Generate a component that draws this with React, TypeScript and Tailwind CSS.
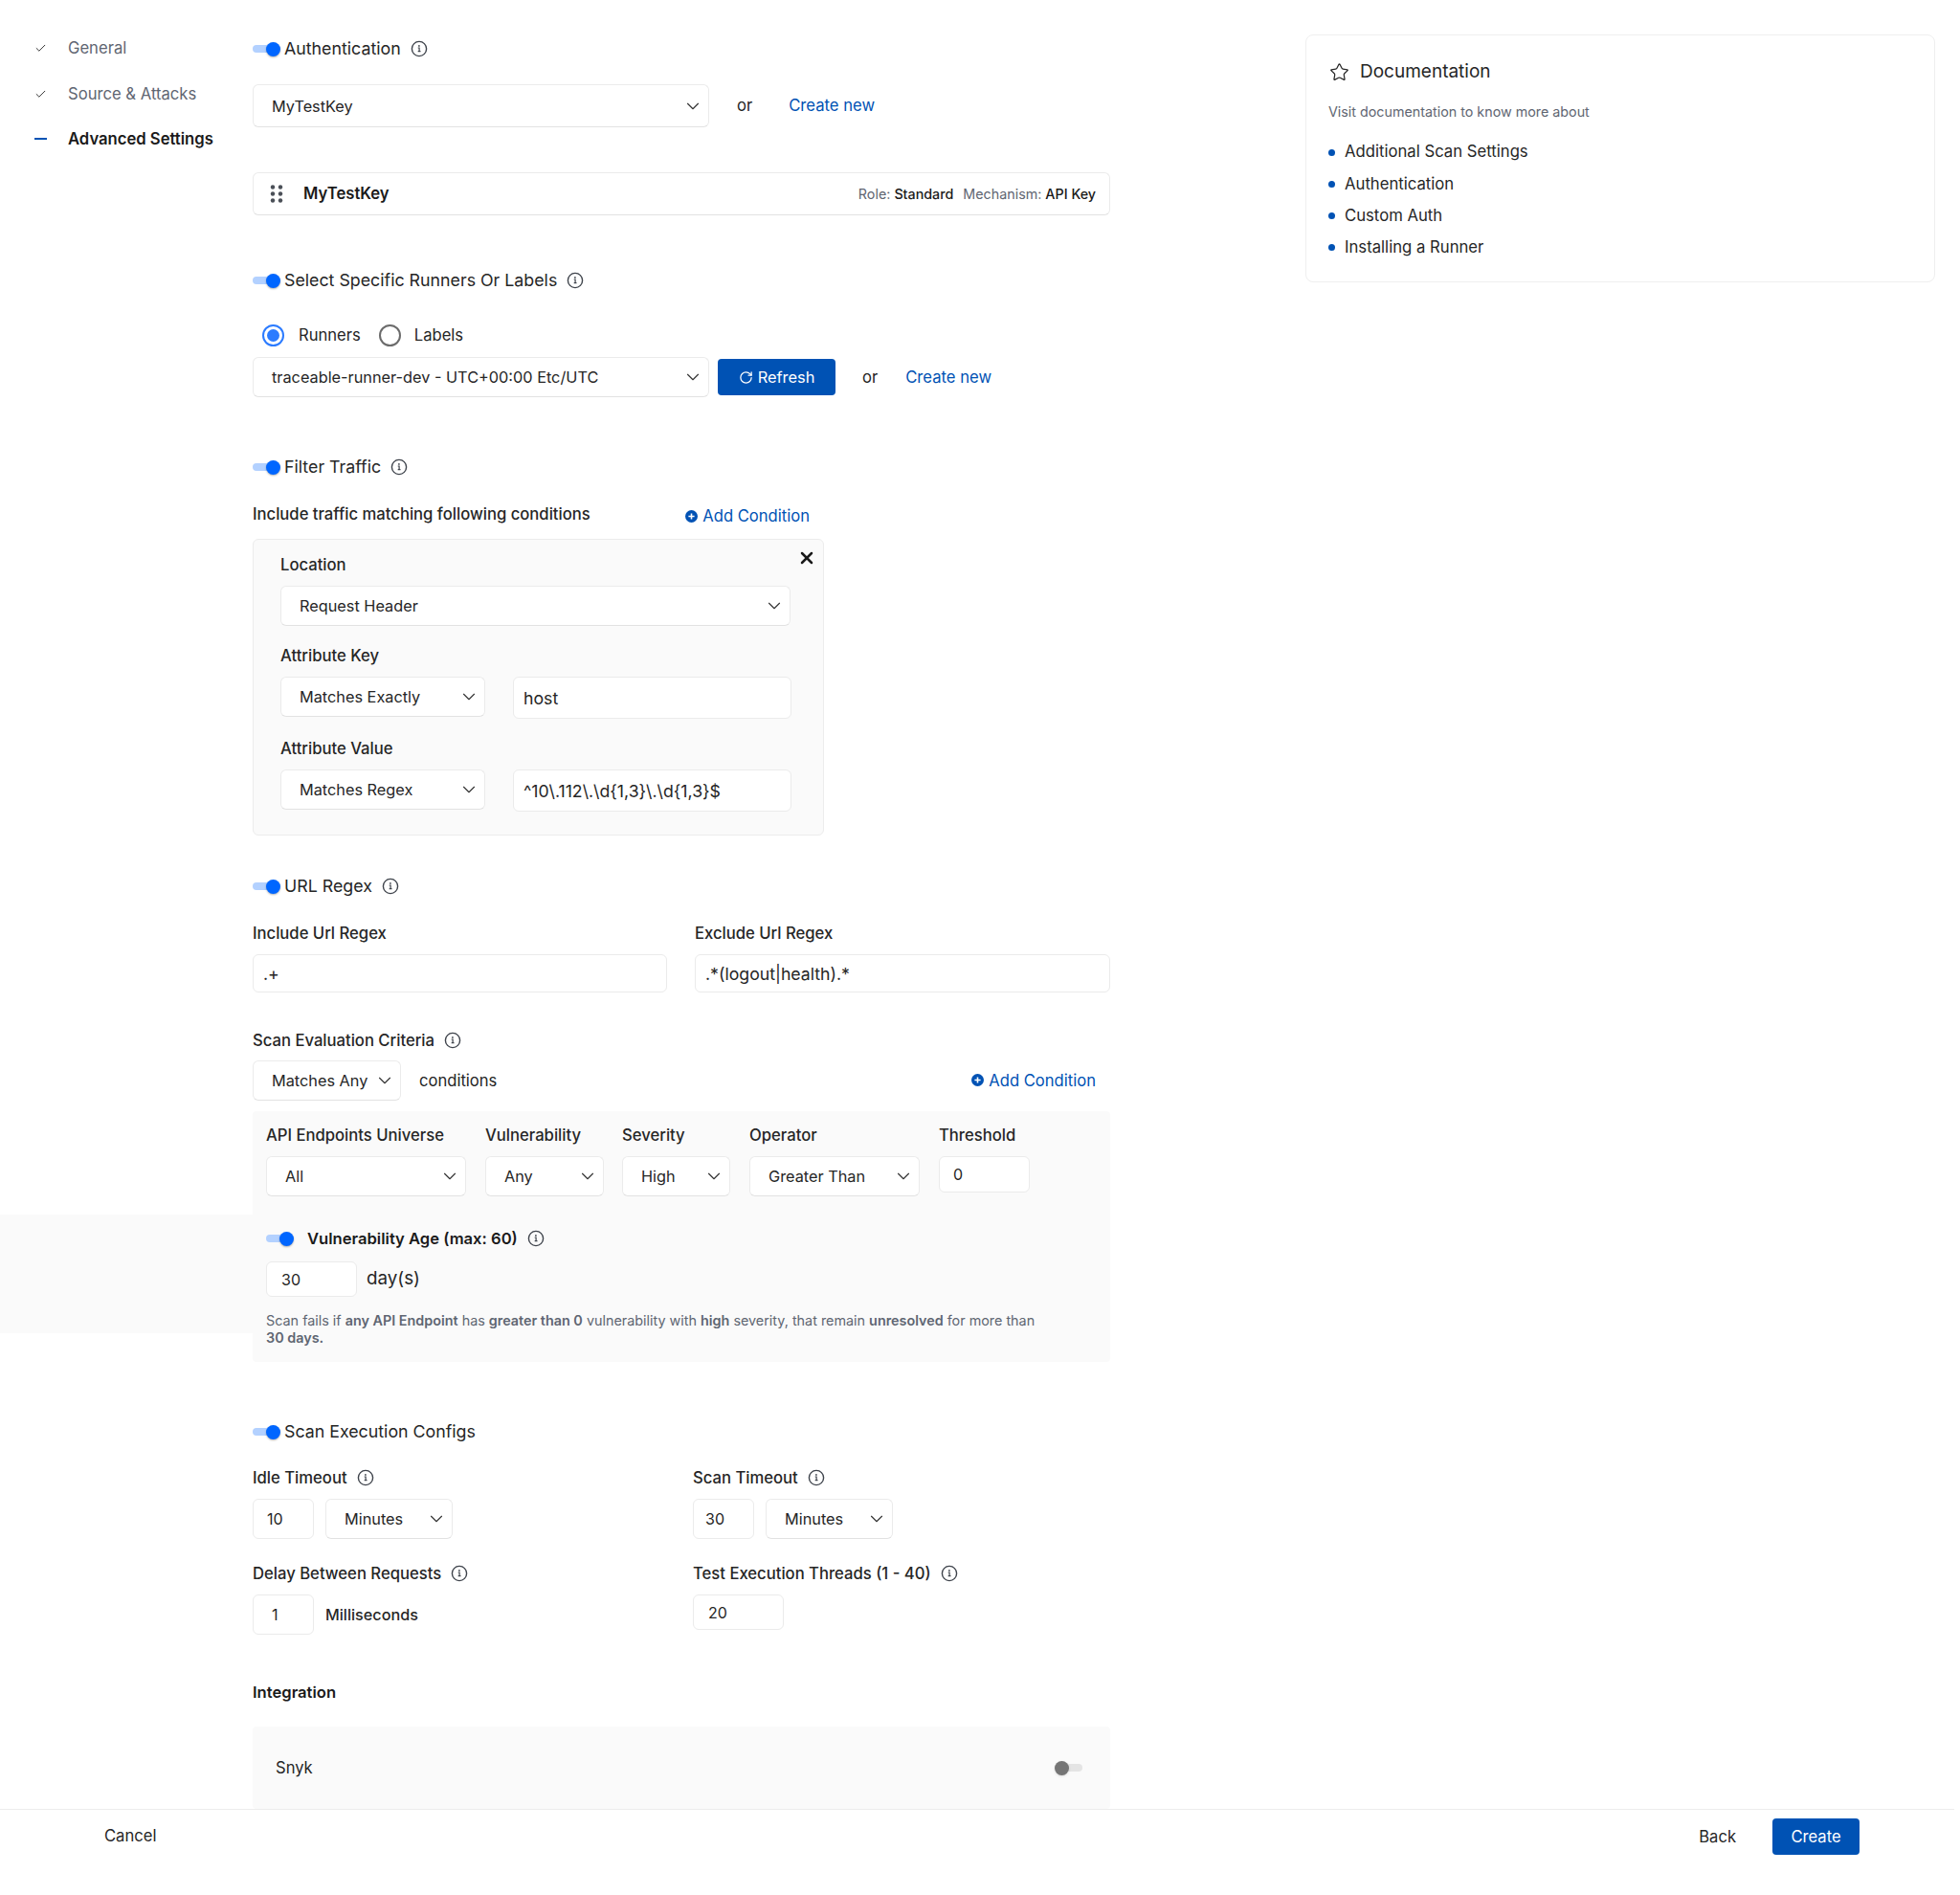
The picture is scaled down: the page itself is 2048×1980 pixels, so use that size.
import React from "react";
import { Check, ChevronDown, RotateCw, Star, X } from "lucide-react";

function Toggle({ on = true }: { on?: boolean }) {
  if (!on) {
    return (
      <div className="flex items-center shrink-0 w-[29px]">
        <div className="w-[15px] h-[15px] rounded-full bg-[#757575] shadow-sm z-10" />
        <div className="w-[20px] h-[8px] -ml-[6px] rounded-r-full bg-[#e4e4e4]" />
      </div>
    );
  }
  return (
    <div className="flex items-center shrink-0 w-[29px]">
      <div className="w-[20px] h-[8px] rounded-l-full bg-[#b3d1ff]" />
      <div className="w-[15px] h-[15px] -ml-[6px] rounded-full bg-[#0066ff] shadow-[0_1px_2px_rgba(0,0,0,0.3)]" />
    </div>
  );
}

function Info() {
  return (
    <svg width="18" height="18" viewBox="0 0 18 18" fill="none" className="shrink-0">
      <circle cx="9" cy="9" r="7.6" stroke="#3f444c" strokeWidth="1.4" />
      <path d="M7.7 8h1.4v3.7M7.7 11.7h2.8" stroke="#3f444c" strokeWidth="1.2" />
      <circle cx="8.9" cy="5.9" r="0.9" fill="#3f444c" />
    </svg>
  );
}

function Select({ label, w, h = "h-[42px]", pl = "pl-[19px]" }: { label: string; w: string; h?: string; pl?: string }) {
  return (
    <div className={`${w} ${h} ${pl} pr-[5px] shrink-0 flex items-center justify-between bg-white rounded-md border border-[#ebebeb] border-b-[#e2e2e2] text-[16.3px] text-[#262626]`}>
      <span className="pt-[1px]">{label}</span>
      <ChevronDown size={22} strokeWidth={1.25} className="text-[#333]" />
    </div>
  );
}

function Field({ value, w, h, pl = "pl-[10px]", text = "text-[17.7px]" }: { value: string; w: string; h: string; pl?: string; text?: string }) {
  return (
    <input
      readOnly
      value={value}
      className={`${w} ${h} ${pl} ${text} shrink-0 bg-white rounded-md border border-[#ebebeb] text-[#262626] outline-none`}
    />
  );
}

function SectionHead({ title, info = true, cls }: { title: string; info?: boolean; cls: string }) {
  return (
    <div className={`flex items-center h-6 ${cls}`}>
      <Toggle />
      <span className="ml-[4px] text-[17.8px] text-[#262626]">{title}</span>
      {info && <span className="ml-[10px]"><Info /></span>}
    </div>
  );
}

function PlusDot() {
  return (
    <svg width="13" height="13" viewBox="0 0 13 13" className="shrink-0">
      <circle cx="6.5" cy="6.5" r="6.5" fill="#0052b4" />
      <path d="M6.5 3.4v6.2M3.4 6.5h6.2" stroke="#fff" strokeWidth="1.6" />
    </svg>
  );
}

function AddCondition() {
  return (
    <div className="flex items-center gap-[5px] text-[16.6px] text-[#0052b4]">
      <PlusDot />
      <span>Add Condition</span>
    </div>
  );
}

function Label({ children, cls = "" }: { children: React.ReactNode; cls?: string }) {
  return <div className={`h-6 flex items-center text-[16.65px] font-medium text-[#262626] ${cls}`}>{children}</div>;
}

function SideItem({ label, state, cls }: { label: string; state: "done" | "active"; cls: string }) {
  return (
    <div className={`flex items-center h-6 ${cls}`}>
      <div className="w-[35px] flex items-center">
        {state === "done" ? (
          <Check size={13} strokeWidth={1.7} className="text-[#222]" />
        ) : (
          <div className="w-[13px] h-[2px] bg-[#0052b4]" />
        )}
      </div>
      <span className={state === "done" ? "text-[16.65px] text-[#5f6672]" : "text-[16.65px] font-semibold text-[#1a1a1a]"}>{label}</span>
    </div>
  );
}

const docs = ["Additional Scan Settings", "Authentication", "Custom Auth", "Installing a Runner"];

export default function App() {
  return (
    <div className="[font-family:Inter,sans-serif] w-[2048px] h-[1980px] bg-white flex flex-col overflow-hidden">
      <div className="flex h-[1890px]">
        {/* sidebar */}
        <aside className="w-[264px] shrink-0 pl-[36px] pt-[38px]">
          <SideItem label="General" state="done" cls="" />
          <SideItem label="Source & Attacks" state="done" cls="mt-[24px]" />
          <SideItem label="Advanced Settings" state="active" cls="mt-[23px]" />
        </aside>

        {/* main form */}
        <main className="w-[896px] shrink-0 pt-[39px]">
          <SectionHead title="Authentication" cls="" />
          <div className="flex items-center mt-[25px]">
            <Select label="MyTestKey" w="w-[477px]" h="h-[45px]" />
            <span className="ml-[29px] text-[16.6px] text-[#262626]">or</span>
            <span className="ml-[38px] text-[16.65px] text-[#0052b4]">Create new</span>
          </div>

          <div className="mt-[47px] h-[45px] flex items-center justify-between pl-[17px] pr-[14px] rounded-md border border-[#ebebeb] border-b-[#e2e2e2]">
            <div className="flex items-center">
              <svg width="14" height="19" viewBox="0 0 14 19" fill="#4a4f57">
                <circle cx="3" cy="2.5" r="2.2" />
                <circle cx="11" cy="2.5" r="2.2" />
                <circle cx="3" cy="9.5" r="2.2" />
                <circle cx="11" cy="9.5" r="2.2" />
                <circle cx="3" cy="16.5" r="2.2" />
                <circle cx="11" cy="16.5" r="2.2" />
              </svg>
              <span className="ml-[21px] text-[16.65px] font-semibold text-[#1a1a1a]">MyTestKey</span>
            </div>
            <div className="text-[14.3px] text-[#5f6672]">
              Role: <span className="font-medium text-[#1a1a1a]">Standard</span>
              <span className="ml-[10px]">Mechanism: </span>
              <span className="font-medium text-[#1a1a1a]">API Key</span>
            </div>
          </div>

          <SectionHead title="Select Specific Runners Or Labels" cls="mt-[56px]" />
          <div className="flex items-center h-6 mt-[33px] pl-[10px] text-[16.6px] text-[#262626]">
            <div className="w-[23px] h-[23px] rounded-full border-2 border-[#2b7bff] flex items-center justify-center">
              <div className="w-[13px] h-[13px] rounded-full bg-[#2b7bff]" />
            </div>
            <span className="ml-[15px]">Runners</span>
            <div className="ml-[19px] w-[23px] h-[23px] rounded-full border-2 border-[#6b6b6b]" />
            <span className="ml-[14px]">Labels</span>
          </div>
          <div className="flex items-center mt-[11px]">
            <Select label="traceable-runner-dev - UTC+00:00 Etc/UTC" w="w-[477px]" />
            <div className="ml-[9px] w-[123px] h-[38px] rounded bg-[#0052b4] text-white text-[16.4px] flex items-center justify-center gap-[5px]">
              <RotateCw size={15} strokeWidth={2} />
              <span>Refresh</span>
            </div>
            <span className="ml-[28px] text-[16.6px] text-[#262626]">or</span>
            <span className="ml-[29px] text-[16.65px] text-[#0052b4]">Create new</span>
          </div>

          <SectionHead title="Filter Traffic" cls="mt-[61px]" />
          <div className="flex items-center h-6 mt-[27px] w-[596px] justify-between">
            <span className="text-[16.65px] font-medium text-[#262626] -mt-[3px]">Include traffic matching following conditions</span>
            <div className="mr-[14px]"><AddCondition /></div>
          </div>

          <div className="relative mt-[12px] w-[597px] h-[310px] rounded-md border border-[#ececec] bg-[#fafafa] pl-[28px] pt-[14px]">
            <X size={20} strokeWidth={3} className="absolute top-[9px] right-[7px] text-[#1a1a1a]" />
            <Label>Location</Label>
            <div className="mt-[10px]"><Select label="Request Header" w="w-[533px]" /></div>
            <Label cls="mt-[19px]">Attribute Key</Label>
            <div className="mt-[10px] flex items-start gap-[29px]">
              <Select label="Matches Exactly" w="w-[214px]" />
              <Field value="host" w="w-[291px]" h="h-[44px]" />
            </div>
            <Label cls="mt-[19px]">Attribute Value</Label>
            <div className="mt-[10px] flex items-start gap-[29px]">
              <Select label="Matches Regex" w="w-[214px]" />
              <Field value="^10\.112\.\d{1,3}\.\d{1,3}$" w="w-[291px]" h="h-[44px]" />
            </div>
          </div>

          <SectionHead title="URL Regex" cls="mt-[41px]" />
          <div className="flex gap-[29px] mt-[25px]">
            <div className="w-[433px]">
              <Label>Include Url Regex</Label>
              <div className="mt-[10px]"><Field value=".+" w="w-[433px]" h="h-[40px]" /></div>
            </div>
            <div className="w-[434px]">
              <Label>Exclude Url Regex</Label>
              <div className="mt-[10px]"><Field value=".*(logout|health).*" w="w-[434px]" h="h-[40px]" /></div>
            </div>
          </div>

          <div className="flex items-center gap-[10px] h-6 mt-[38px]">
            <span className="text-[16.65px] font-medium text-[#262626]">Scan Evaluation Criteria</span>
            <Info />
          </div>
          <div className="flex items-center mt-[9px]">
            <Select label="Matches Any" w="w-[155px]" />
            <span className="ml-[19px] text-[16.6px] text-[#262626]">conditions</span>
            <div className="ml-auto mr-[15px]"><AddCondition /></div>
          </div>

          <div className="relative mt-[11px] h-[262px] bg-[#fafafa] pl-[14px] pt-[13px] rounded-sm">
            <div className="absolute -left-[264px] top-[108px] w-[264px] h-[124px] bg-[#fafafa]" />
            <div className="flex">
              <div>
                <Label cls="mb-[10px]">API Endpoints Universe</Label>
                <Select label="All" w="w-[209px]" />
              </div>
              <div className="ml-[20px]">
                <Label cls="mb-[10px]">Vulnerability</Label>
                <Select label="Any" w="w-[124px]" />
              </div>
              <div className="ml-[19px]">
                <Label cls="mb-[10px]">Severity</Label>
                <Select label="High" w="w-[113px]" />
              </div>
              <div className="ml-[20px]">
                <Label cls="mb-[10px]">Operator</Label>
                <Select label="Greater Than" w="w-[178px]" />
              </div>
              <div className="ml-[20px]">
                <Label cls="mb-[10px]">Threshold</Label>
                <Field value="0" w="w-[95px]" h="h-[38px]" pl="pl-[14px]" text="text-base" />
              </div>
            </div>
            <div className="flex items-center h-6 mt-[32px]">
              <Toggle />
              <span className="ml-[14px] text-[16.6px] font-semibold text-[#1a1a1a]">Vulnerability Age (max: 60)</span>
              <span className="ml-[10px]"><Info /></span>
            </div>
            <div className="flex items-center mt-[12px]">
              <Field value="30" w="w-[95px]" h="h-[37px]" pl="pl-[15px]" text="text-base" />
              <span className="ml-[10px] text-[18.8px] text-[#262626]">day(s)</span>
            </div>
            <p className="mt-[16px] w-[810px] text-[14.37px] leading-[18px] text-[#5f6672]">
              Scan fails if <b className="font-semibold">any API Endpoint</b> has <b className="font-semibold">greater than 0</b> vulnerability with <b className="font-semibold">high</b> severity, that remain <b className="font-semibold">unresolved</b> for more than <b className="font-semibold">30 days.</b>
            </p>
          </div>

          <SectionHead title="Scan Execution Configs" info={false} cls="mt-[61px]" />
          <div className="flex mt-[24px]">
            <div className="w-[460px]">
              <div className="flex items-center gap-[10px] h-6">
                <span className="text-[16.65px] font-medium text-[#262626]">Idle Timeout</span>
                <Info />
              </div>
              <div className="flex gap-[12px] mt-[10px]">
                <Field value="10" w="w-[64px]" h="h-[42px]" pl="pl-[14px]" text="text-base" />
                <Select label="Minutes" w="w-[133px]" />
              </div>
            </div>
            <div>
              <div className="flex items-center gap-[10px] h-6">
                <span className="text-[16.65px] font-medium text-[#262626]">Scan Timeout</span>
                <Info />
              </div>
              <div className="flex gap-[12px] mt-[10px]">
                <Field value="30" w="w-[64px]" h="h-[42px]" pl="pl-[12px]" text="text-base" />
                <Select label="Minutes" w="w-[133px]" />
              </div>
            </div>
          </div>
          <div className="flex mt-[24px]">
            <div className="w-[460px]">
              <div className="flex items-center gap-[10px] h-6">
                <span className="text-[16.65px] font-medium text-[#262626]">Delay Between Requests</span>
                <Info />
              </div>
              <div className="flex items-center gap-[12px] mt-[10px]">
                <Field value="1" w="w-[64px]" h="h-[42px]" pl="pl-[19px]" text="text-base" />
                <span className="text-[16.2px] font-medium text-[#262626]">Milliseconds</span>
              </div>
            </div>
            <div>
              <div className="flex items-center gap-[10px] h-6">
                <span className="text-[16.65px] font-medium text-[#262626]">Test Execution Threads (1 - 40)</span>
                <Info />
              </div>
              <div className="mt-[10px]">
                <Field value="20" w="w-[95px]" h="h-[37px]" pl="pl-[15px]" text="text-base" />
              </div>
            </div>
          </div>

          <div className="h-6 mt-[48px] flex items-center text-[16.6px] font-semibold text-[#1a1a1a]">Integration</div>
          <div className="mt-[24px] h-[86px] bg-[#fafafa] flex items-center justify-between pl-[24px] pr-[29px] rounded-sm">
            <span className="text-[16.6px] text-[#262626]">Snyk</span>
            <Toggle on={false} />
          </div>
        </main>

        {/* documentation */}
        <div className="flex-1 pl-[204px] pr-[26px] pt-[36px]">
          <div className="h-[259px] rounded-lg border border-[#efefef] pl-[23px] pt-[26px]">
            <div className="flex items-center gap-[11px] h-6">
              <Star size={21} strokeWidth={1.4} className="ml-[1px] text-[#262626]" />
              <span className="text-[19px] text-[#262626]">Documentation</span>
            </div>
            <div className="mt-[20px] text-[14.3px] leading-5 text-[#5f6672]">Visit documentation to know more about</div>
            <ul className="mt-[20px] flex flex-col gap-[9.3px]">
              {docs.map((d) => (
                <li key={d} className="flex items-center h-6 text-[16.7px] text-[#262626]">
                  <span className="w-[7px] h-[7px] rounded-full bg-[#0052b4] mr-[10px]" />
                  {d}
                </li>
              ))}
            </ul>
          </div>
        </div>
      </div>

      {/* footer */}
      <footer className="flex-1 w-[2042px] border-t border-[#ececec] flex items-start justify-between pl-[109px] pr-[99px]">
        <span className="mt-[15px] text-[16.6px] text-[#262626]">Cancel</span>
        <div className="flex items-center mt-[9px]">
          <span className="text-[16.6px] text-[#262626]">Back</span>
          <div className="ml-[38px] w-[91px] h-[38px] rounded bg-[#0052b4] text-white text-[16.6px] flex items-center justify-center">Create</div>
        </div>
      </footer>
    </div>
  );
}
